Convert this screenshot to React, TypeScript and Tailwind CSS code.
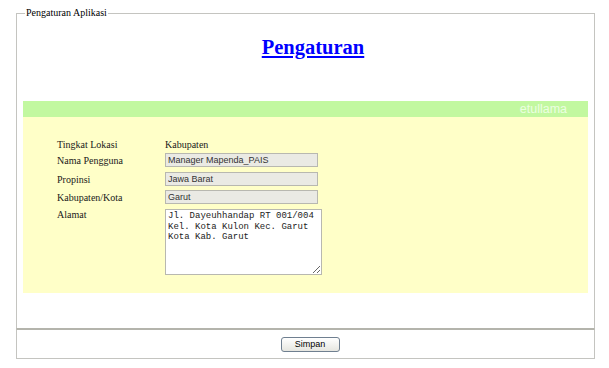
import React from 'react';

const serif = { fontFamily: '"Liberation Serif", "Times New Roman", serif' };

export default function App() {
  const rows = [
    { label: 'Nama Pengguna', value: 'Manager Mapenda_PAIS', mt: 'mt-[1px]' },
    { label: 'Propinsi', value: 'Jawa Barat', mt: 'mt-[5px]' },
    { label: 'Kabupaten/Kota', value: 'Garut', mt: 'mt-[4px]' },
  ];

  return (
    <div className="w-[609px] h-[368px] bg-white pt-[7px] pl-[16px] font-['Liberation_Sans',Arial,sans-serif]">
      {/* Pengaturan Aplikasi fieldset */}
      <fieldset className="w-[579px] h-[322px] border border-[#c4c4c0] border-b-[#b4b4ac] px-[6px]">
        <legend className="ml-[2px] px-[1px] text-[10px] leading-[12px] text-black font-['Liberation_Serif','Times_New_Roman',serif]">
          Pengaturan Aplikasi
        </legend>

        <div className="pt-[16px] pl-[15px] flex justify-center">
          <a
            href="#"
            className="text-[20.5px] leading-[24px] font-bold text-[#0000ff] underline underline-offset-[2px] font-['Liberation_Serif','Times_New_Roman',serif]"
          >
            Pengaturan
          </a>
        </div>

        {/* header bar */}
        <div className="mt-[42px] h-[16px] w-[565px] bg-[#c2f8a0] flex items-center justify-end pr-[21px]">
          <span className="text-[12.5px] leading-[16px] text-[#ecffe0]">etullama</span>
        </div>

        {/* form area */}
        <div className="w-[565px] h-[176px] bg-[#ffffc8] pt-[19px] pl-[34px]">
          <div className="flex items-center h-[16px] text-[10px] text-[#1a1a1a]" style={serif}>
            <div className="w-[108px]">Tingkat Lokasi</div>
            <div>Kabupaten</div>
          </div>

          {rows.map((r) => (
            <div key={r.label} className={`flex items-center h-[14px] ${r.mt}`}>
              <div className="w-[108px] text-[10px] text-[#1a1a1a]" style={serif}>
                {r.label}
              </div>
              <input
                readOnly
                value={r.value}
                className="w-[153px] h-[14px] bg-[#eaeae4] border border-[#b8b8b0] px-[2px] text-[9px] leading-[12px] text-[#333] outline-none"
              />
            </div>
          ))}

          <div className="flex items-start mt-[5px]">
            <div className="w-[108px] text-[10px] leading-[12px] text-[#1a1a1a]" style={serif}>
              Alamat
            </div>
            <textarea
              readOnly
              value={'Jl. Dayeuhhandap RT 001/004\nKel. Kota Kulon Kec. Garut\nKota Kab. Garut'}
              className="w-[157px] h-[66px] bg-white border border-[#b8b8b0] px-[2px] py-[1px] text-[9px] leading-[10.5px] text-[#222] outline-none resize-y font-['Liberation_Mono','Courier_New',monospace]"
            />
          </div>
        </div>
      </fieldset>

      {/* button bar */}
      <div className="w-[579px] h-[30px] border border-t-[#b4b4ac] border-[#c4c4c0] flex items-center justify-center pl-[9px]">
        <button className="w-[59px] h-[15px] rounded-[3px] border border-[#6f7f90] bg-gradient-to-b from-white to-[#e6e6e0] text-[9px] leading-[12px] text-black">
          Simpan
        </button>
      </div>
    </div>
  );
}
